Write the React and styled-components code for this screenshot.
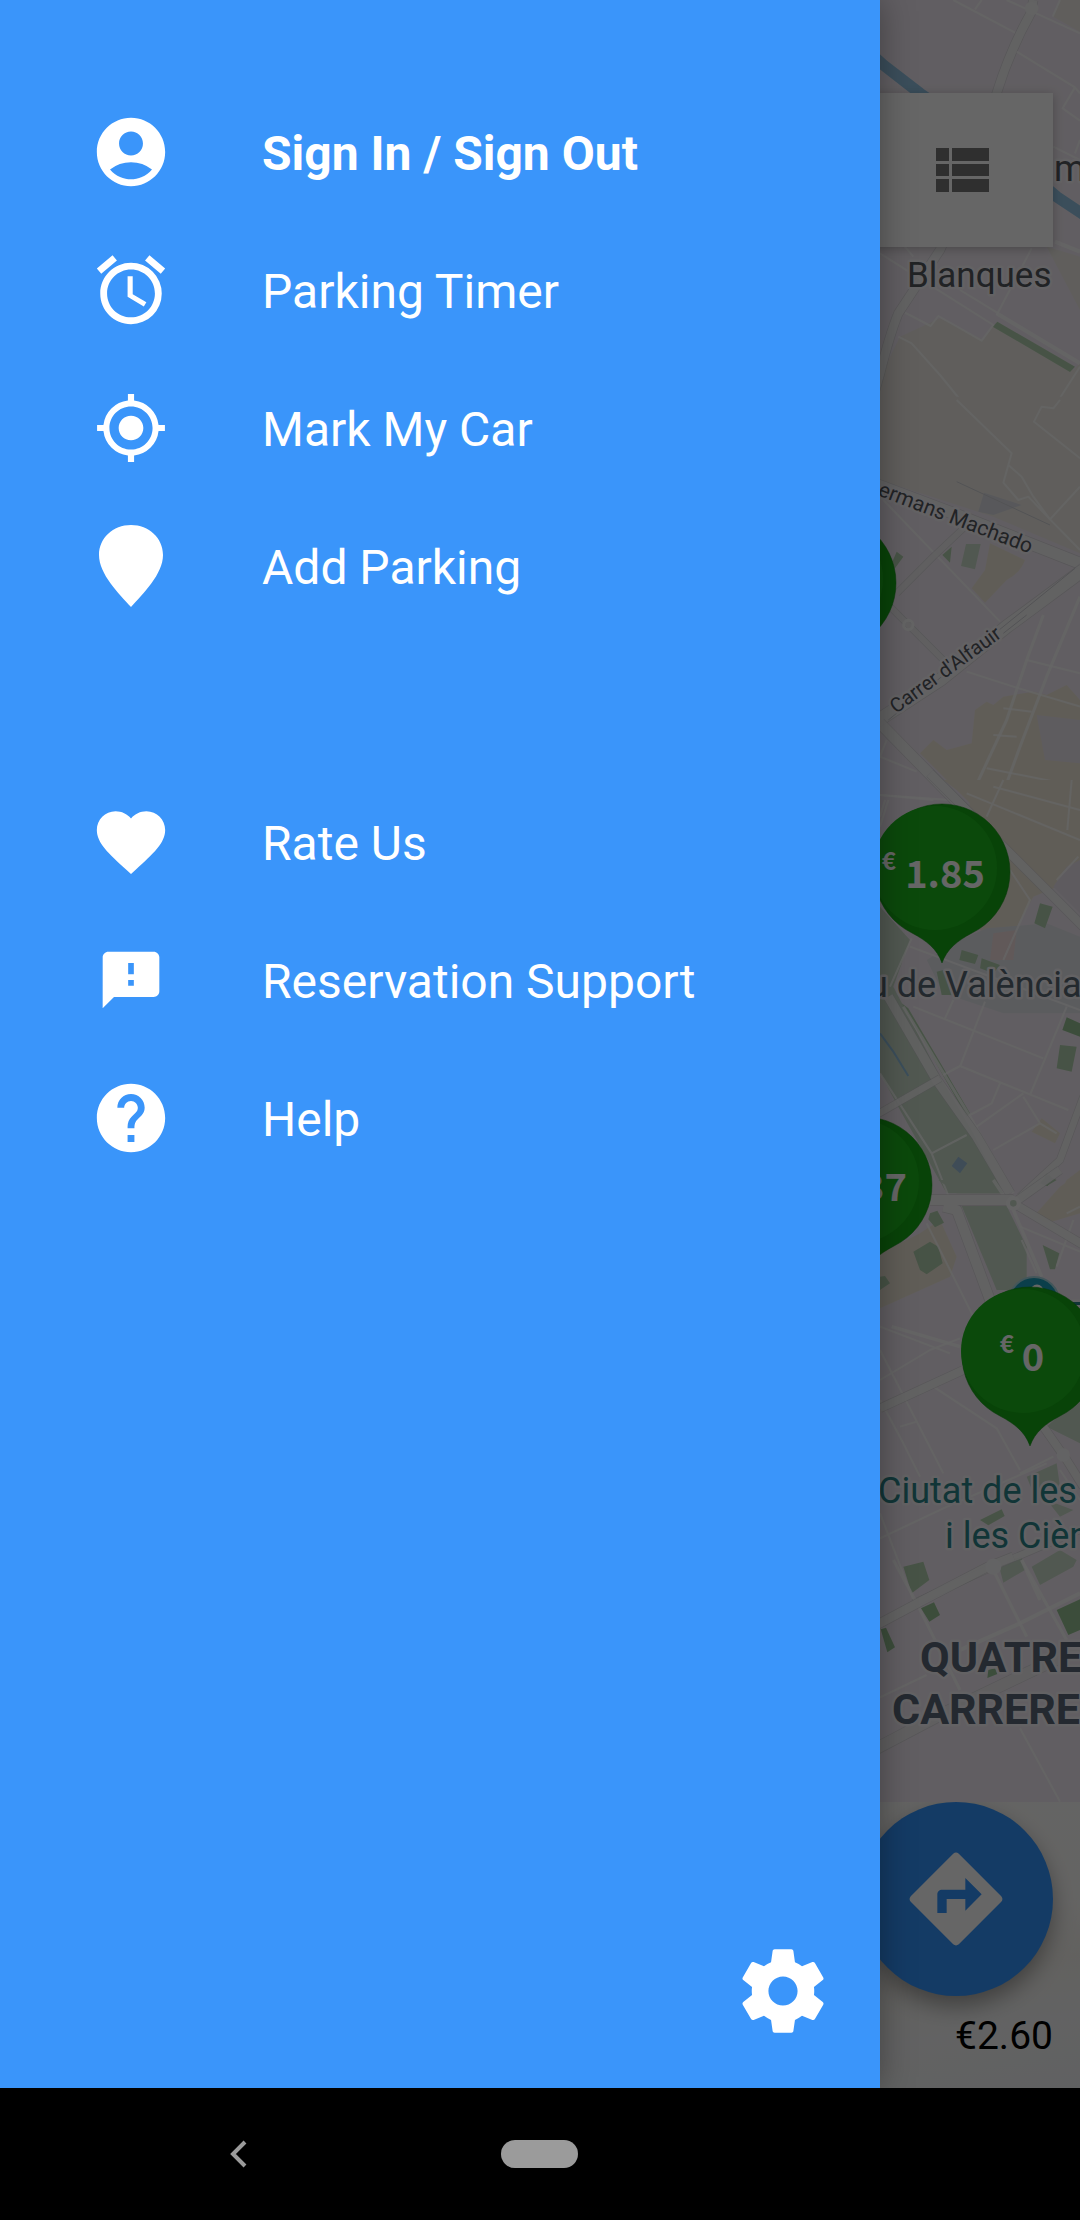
import React from 'react';
import styled, { createGlobalStyle } from 'styled-components';
import {
  MdAccountCircle,
  MdAlarm,
  MdMyLocation,
  MdFavorite,
  MdFeedback,
  MdHelp,
} from 'react-icons/md';

const GlobalStyle = createGlobalStyle`
  * {
    box-sizing: border-box;
  }
  body {
    margin: 0;
    background: #000;
    font-family: Roboto, "Noto Sans", sans-serif;
  }
  button {
    padding: 0;
    border: 0;
    background: none;
    color: inherit;
    font: inherit;
    cursor: pointer;
  }
`;

const Screen = styled.div`
  display: flex;
  flex-direction: column;
  min-height: 100vh;
`;

const Stage = styled.div`
  position: relative;
  display: flex;
  flex: 1;
  overflow: hidden;
`;

const Page = styled.main`
  display: flex;
  flex: 1;
  flex-direction: column;
  background: #fff;
`;

const MapArea = styled.section`
  position: relative;
  flex: 1;
  padding: 93px 27px 0;
  overflow: hidden;
`;

const MapCanvas = styled.svg`
  position: absolute;
  inset: 0;
  width: 100%;
  height: 100%;
`;

const SearchCard = styled.div`
  position: relative;
  display: flex;
  justify-content: flex-end;
  height: 154px;
  background: #fff;
  box-shadow: 0 2px 10px rgba(0, 0, 0, 0.25);
`;

const ListButton = styled.button`
  display: flex;
  align-items: center;
  justify-content: center;
  width: 181px;
  && {
    color: #757575;
  }
`;

const Sheet = styled.section`
  display: flex;
  flex-direction: column;
  align-items: flex-end;
  height: 286px;
  padding-right: 27px;
  background: linear-gradient(170deg, #fbfbfa 0%, #fbfaf8 60%, #f5f3ee 72%, #f5f6f7 84%, #f1f2f4 100%);
`;

const DirectionsButton = styled.button`
  display: flex;
  align-items: center;
  justify-content: center;
  width: 194px;
  height: 194px;
  border-radius: 50%;
  box-shadow: 0 10px 22px rgba(0, 0, 0, 0.35);
  && {
    background: #3394fd;
    color: #fff;
  }
`;

const Price = styled.p`
  margin: 16px 0 0;
  font-size: 39px;
  line-height: 48px;
  color: #000;
`;

const Scrim = styled.div`
  position: absolute;
  inset: 0;
  background: rgba(0, 0, 0, 0.6);
`;

const Drawer = styled.nav`
  position: absolute;
  top: 0;
  bottom: 0;
  left: 0;
  display: flex;
  flex-direction: column;
  width: calc(100% - 200px);
  max-width: 880px;
  padding-top: 83px;
  background: #3a95fa;
  box-shadow: 0 0 32px rgba(0, 0, 0, 0.35);
  color: #fff;
`;

const MenuList = styled.ul`
  margin: 0 0 138px;
  padding: 0;
  list-style: none;
`;

const MenuLink = styled.a`
  display: grid;
  grid-template-columns: 82px 1fr;
  gap: 90px;
  align-items: center;
  height: 138px;
  padding-left: 90px;
  color: #fff;
  font-size: 48px;
  font-weight: ${({ $strong }) => ($strong ? 700 : 400)};
  line-height: 56px;
  text-decoration: none;
`;

const MenuIcon = styled.span`
  display: flex;
  justify-content: center;
`;

const MenuLabel = styled.span`
  padding-top: 4px;
`;

const SettingsButton = styled.button`
  display: flex;
  align-self: flex-end;
  margin: auto 47px 47px 0;
`;

const SystemBar = styled.footer`
  display: grid;
  grid-template-columns: repeat(3, 28%);
  justify-content: center;
  height: 132px;
  background: #000;
`;

const SystemButton = styled.button`
  display: flex;
  align-items: center;
  justify-content: center;
`;

const HomePill = styled.span`
  width: 77px;
  height: 28px;
  border-radius: 14px;
  background: #9b9b9b;
`;

const PinIcon = () => (
  <svg width="64" height="82" viewBox="0 0 64 82" fill="currentColor">
    <path d="M32 0C14 0 0 13 0 30c0 19 20 39 32 52 12-13 32-33 32-52C64 13 50 0 32 0z" />
  </svg>
);

const SettingsIcon = () => (
  <svg width="100" height="100" viewBox="0 0 24 24" fill="currentColor">
    <path d="M19.43 12.98c.04-.32.07-.64.07-.98s-.03-.66-.07-.98l2.11-1.65c.19-.15.24-.42.12-.64l-2-3.46c-.12-.22-.39-.3-.61-.22l-2.49 1c-.52-.4-1.08-.73-1.69-.98l-.38-2.65C14.46 2.18 14.25 2 14 2h-4c-.25 0-.46.18-.49.42l-.38 2.65c-.61.25-1.17.59-1.69.98l-2.49-1c-.23-.09-.49 0-.61.22l-2 3.46c-.13.22-.07.49.12.64l2.11 1.65c-.04.32-.07.65-.07.98s.03.66.07.98l-2.11 1.65c-.19.15-.24.42-.12.64l2 3.46c.12.22.39.3.61.22l2.49-1c.52.4 1.08.73 1.69.98l.38 2.65c.03.24.24.42.49.42h4c.25 0 .46-.18.49-.42l.38-2.65c.61-.25 1.17-.59 1.69-.98l2.49 1c.23.09.49 0 .61-.22l2-3.46c.12-.22.07-.49-.12-.64l-2.11-1.65zM12 15.5c-1.93 0-3.5-1.57-3.5-3.5s1.57-3.5 3.5-3.5 3.5 1.57 3.5 3.5-1.57 3.5-3.5 3.5z" />
  </svg>
);

const DirectionsIcon = () => (
  <svg width="112" height="112" viewBox="0 0 24 24" fill="currentColor">
    <path d="M11.4 2.3Q12 1.8 12.6 2.3L21.7 11.4Q22.2 12 21.7 12.6L12.6 21.7Q12 22.2 11.4 21.7L2.3 12.6Q1.8 12 2.3 11.4zM14 14.5l3.5-3.5L14 7.5V10H9c-.55 0-1 .45-1 1v4h2v-3h4z" fillRule="evenodd" />
  </svg>
);

const ListIcon = () => (
  <svg width="53" height="44" viewBox="0 0 53 44" fill="currentColor">
    <path d="M0 0h13v13H0zM16 0h37v13H16zM0 16h13v12H0zM16 16h37v12H16zM0 31h13v13H0zM16 31h37v13H16z" />
  </svg>
);

const BackIcon = () => (
  <svg width="18" height="28" viewBox="0 0 18 28" fill="none" stroke="#9b9b9b" strokeWidth="4">
    <path d="M16 2L4 14l12 12" />
  </svg>
);

const mainItems = [
  { label: 'Sign In / Sign Out', icon: <MdAccountCircle size={82} />, strong: true },
  { label: 'Parking Timer', icon: <MdAlarm size={82} /> },
  { label: 'Mark My Car', icon: <MdMyLocation size={74} /> },
  { label: 'Add Parking', icon: <PinIcon /> },
];

const supportItems = [
  { label: 'Rate Us', icon: <MdFavorite size={82} /> },
  { label: 'Reservation Support', icon: <MdFeedback size={68} /> },
  { label: 'Help', icon: <MdHelp size={82} /> },
];

const Menu = ({ items }) => (
  <MenuList>
    {items.map(item => (
      <li key={item.label}>
        <MenuLink href="#" $strong={item.strong}>
          <MenuIcon>{item.icon}</MenuIcon>
          <MenuLabel>{item.label}</MenuLabel>
        </MenuLink>
      </li>
    ))}
  </MenuList>
);

// map geometry is kept in tiles, three units to a pixel
const Tile = ({ y, children }) => (
  <g transform={`translate(860 ${y}) scale(${1 / 3})`}>{children}</g>
);

const Roads = ({ d, w = 9, o = 0.75 }) => (
  <React.Fragment>
    {w > 14 && <path d={d} fill="none" stroke="#c9c9cd" strokeWidth={w + 4} opacity="0.6" />}
    <path d={d} fill="none" stroke="#fdfdfe" strokeWidth={w} opacity={o} strokeLinejoin="round" />
  </React.Fragment>
);

const Land = ({ d, fill }) => <path d={d} fill={fill} />;

const RURAL = '#efece6';
const SAND = '#f1e9da';
const PARK = '#cbdccb';
const GREEN = '#b2d0af';
const DEEP_GREEN = '#97c195';
const WATER = '#94c4e4';
const CAMPUS = '#e4e6ec';

const MapGround = () => (
  <React.Fragment>
    <Tile y={0}>
      <Land fill={RURAL} d="M600 0L660 0V95L580 50zM0 1260L60 1130 120 1010 240 955 370 1020 400 975 640 1110 660 1090V1300H0zM560 740L660 770V930z" />
      <Land fill={GREEN} d="M412 965L645 1100 630 1116 398 980z" />
      <path d="M20 150L70 195 180 280L400 430L590 590L680 650" fill="none" stroke={WATER} strokeWidth="34" />
      <Roads w={26} d="M520 0L512 40Q450 150 410 280L330 550 240 750 115 940Q90 1000 60 1120L20 1260" />
      <Roads w={6} d="M280 0L465 98M440 0L660 100M365 0L345 28M600 0L578 50M470 155L645 262 608 325 660 362M645 262L660 280M645 460L660 420M580 440L660 480M60 760L400 975 365 1022 235 948 212 978 135 938M135 740L160 770M515 745L410 945M300 870L415 940M115 1010L155 1030 240 1125 350 1260M660 1100L580 1225 545 1222 520 1260" />
      <Roads w={12} d="M410 940L660 1090M585 725L660 755" />
      <circle cx="515" cy="25" r="20" fill="#f7f7f8" />
    </Tile>
    <Tile y={400}>
      <Land fill={RURAL} d="M0 -10H660V460L400 350 60 240H0z" />
      <Land fill="#dcdde3" d="M372 278L485 315 400 345 355 335z" />
      <Land fill={SAND} d="M390 430L495 480Q480 520 440 540L375 608 335 565 375 510zM345 930L380 905 400 915 430 890 520 875 560 885 620 855 660 900V1260H380L180 1060 220 1020 260 1050 335 1030z" />
      <Land fill="#ece5ee" d="M530 945L660 960V1090L555 1080z" />
      <Land fill={PARK} d="M318 432L362 432 345 508 303 498z" />
      <Land fill={GREEN} d="M110 455L130 470 105 505 95 490zM275 440L270 488 247 465z" />
      <Roads w={6} d="M290 0L455 160 445 195 430 248 475 300 505 290 570 358 660 260M445 195L485 230 520 290 570 358 660 450M600 0L580 25 545 20 522 65 660 175M70 300L420 665M500 780L660 820M320 815L460 860 660 920M60 1070L170 1115M380 1105L660 1160M60 1185L270 1200M400 1005L470 1010M430 925L515 935M80 1020L60 1070M75 1200L60 1250" />
      <Roads w={9} d="M550 645L500 780 440 960 335 1185M660 590L560 830 480 1040 400 1260" />
      <Roads w={18} d="M310 385L220 470 110 580M60 590L130 660 250 780" o={0.6} />
      <Roads w={34} d="M40 250L280 340 660 490" />
      <Roads w={38} d="M670 510L440 680 240 840 40 970" />
      <Roads w={32} d="M60 970L310 1225 420 1330" />
      <circle cx="145" cy="675" r="14" fill="none" stroke="#fafafb" strokeWidth="9" />
      <path d="M290 245L570 375M500 645L430 700M85 960L645 505" fill="none" stroke="#cfcfd4" strokeWidth="3" />
    </Tile>
    <Tile y={780}>
      <Land fill={SAND} d="M250 0H660V240L590 320 520 350 470 440 380 460 300 420 330 60z" />
      <Land fill="#ebe4ee" d="M660 240L620 260 580 320 660 400z" />
      <Land fill={CAMPUS} d="M300 480L380 445 560 430 660 470V700L430 700 250 640 200 540z" />
      <Land fill="#f2dfdf" d="M400 460L470 450 460 540 390 540z" />
      <Land fill={PARK} d="M60 380L150 480 100 620 240 890 340 1060 430 1240H260L120 990 60 880z" />
      <Land fill={GREEN} d="M540 370L578 380 555 445 523 430zM305 510L355 525 345 552 298 540zM365 535L420 555 400 580 360 565zM230 575L250 570 275 645 245 645zM600 795L650 800 635 875 590 865zM125 670L145 685 330 1000 320 1010z" />
      <Land fill={DEEP_GREEN} d="M620 712L660 730V770L607 750zM560 1178L580 1198 562 1218 542 1200z" />
      <Land fill={SAND} d="M545 1015L600 1060 585 1090 515 1055zM620 1200L660 1170V1260H590z" />
      <path d="M60 760L100 815 145 888" fill="none" stroke={WATER} strokeWidth="6" />
      <Land fill="#9dbfd9" d="M295 1130L322 1150 300 1180 275 1158z" />
      <Roads w={6} d="M60 45L220 60M85 60L60 140M430 0L380 110M320 40L660 180M400 20L660 90M635 0L622 150M655 230L590 300M450 270L510 360 430 540M155 475L90 620M150 500L660 690M160 680L550 835M375 665L300 860M280 660L255 715M300 858L625 990M300 858L250 885M620 680L510 945M420 910L395 970 330 1005M490 940L350 1040M490 950L540 1030 400 1110M540 1030L590 1060M60 880L215 1120 320 1065M215 1120L270 1260" />
      <Roads w={9} d="M130 680L330 1010 460 1240" />
      <Roads w={26} d="M210 -20L440 210 670 440" />
      <Roads w={28} d="M85 650L230 900 350 1070 450 1240" />
      <Roads w={20} d="M40 1010L240 895M670 950L600 1140 480 1250" />
    </Tile>
    <Tile y={1180}>
      <Land fill={SAND} d="M60 220L180 160 240 120 290 230 270 290 60 385zM520 110L600 20 660 -20V100L560 130z" />
      <Land fill={PARK} d="M235 0H400L430 40 290 40zM305 78H440L500 200 500 330H410zM560 740L660 650V790zM500 890L590 850 600 920 520 940zM560 960L640 990 600 1010zM415 1150L485 1130 495 1170 430 1208zM515 1160L600 1110 650 1140 640 1160 540 1215z" />
      <Land fill={GREEN} d="M210 100L232 92 252 128 225 142 205 118zM160 215L210 185 235 200 248 250 200 283 180 270zM60 290L75 288 90 310 60 330zM548 195L598 220 585 268 570 268zM540 10L560 -15 590 0 560 18zM360 1020L425 988 434 1008 385 1036zM130 1160L190 1145 208 1200 155 1240z" />
      <Roads w={6} d="M200 130L340 410M60 440L270 520M60 600L210 510 300 475M60 510L250 880M60 660L130 790 180 890M220 620L410 745 480 870M120 740L170 725M480 880L580 830M60 1075L250 985 560 850M60 1000L160 1260M480 140L660 215M485 180L530 280M640 120L590 260M660 80L620 100M600 870L660 960" />
      <Roads w={10} d="M95 440L300 500M460 90L545 290M400 0L440 60M485 1140L540 1260" />
      <Roads w={30} d="M250 80L290 90 390 360 M210 60H460" />
      <Roads w={24} d="M460 70L600 -30M460 70L670 195M60 685L310 570M550 740L620 840 670 920" />
      <Roads w={20} d="M160 1270L400 1160 660 1050" />
      <circle cx="460" cy="70" r="16" fill={PARK} stroke="#fafafb" strokeWidth="12" />
      <circle cx="610" cy="825" r="20" fill="#f8f8f9" />
    </Tile>
    <Tile y={1560}>
      <Land fill={DEEP_GREEN} d="M183 145L222 127 240 165 208 185zM62 208L78 203 105 262 82 277zM590 150L660 118V210L625 225zM385 330L405 325 412 342 382 354z" />
      <Roads w={9} d="M100 0L160 110 220 230 300 390M400 30L500 230M485 0L620 240" />
      <Roads w={6} d="M60 412L200 345M480 505L600 725" />
      <Roads w={12} d="M660 100L480 190 300 270" />
      <Roads w={26} d="M50 195L200 115 380 22 460 -10" />
      <Roads w={34} d="M50 565L250 460 500 340 670 260" o={0.6} />
      <circle cx="400" cy="20" r="24" fill="#f8f8f9" />
    </Tile>
  </React.Fragment>
);

const Label = styled.text`
  fill: ${({ $tone }) => $tone || '#54575e'};
  stroke: #f8f5f9;
  stroke-width: 5px;
  stroke-linejoin: round;
  paint-order: stroke;
  font-size: ${({ $size }) => $size}px;
  font-weight: ${({ $heavy }) => ($heavy ? 700 : 400)};
`;

const PinText = styled.text`
  fill: #fff;
  font-family: "Noto Sans CJK SC", "Noto Sans", sans-serif;
  font-size: ${({ $small }) => ($small ? 24 : 38)}px;
  font-weight: 700;
  text-anchor: ${({ $small }) => ($small ? 'end' : 'middle')};
`;

const PricePin = ({ x, y, value, currencyX = 0 }) => (
  <g transform={`translate(${x} ${y})`}>
    <path
      d="M0 91C-5 77-15 69-30 61A68 68 0 1 1 30 61C15 69 5 77 0 91z"
      fill="#14a814"
      stroke="#0b8a10"
      strokeOpacity="0.5"
    />
    <circle cx="-7" cy="-4" r="62" fill="#1db61d" />
    {value && <PinText $small x={currencyX} y="-2">€</PinText>}
    {value && <PinText x="3" y="16">{value}</PinText>}
  </g>
);

const CityMap = () => (
  <MapCanvas viewBox="0 0 1080 1802" preserveAspectRatio="xMaxYMin slice">
    <rect width="1080" height="1802" fill="#f3ecf4" />
    <MapGround />
    <Label $size={36} x="1054" y="181">m</Label>
    <Label $size={35} x="907" y="287">Blanques</Label>
    <Label $size={21} transform="translate(877 495) rotate(21)">ermans Machado</Label>
    <Label $size={20} transform="translate(896 714) rotate(-36)">Carrer d'Alfauir</Label>
    <Label $size={36} $tone="#596873" x="868" y="997">u de València</Label>
    <Label $size={36} $tone="#2b8489" x="878" y="1503">Ciutat de les</Label>
    <Label $size={36} $tone="#2b8489" x="945" y="1548">i les Cièn</Label>
    <Label $size={43} $tone="#5a6878" $heavy x="920" y="1672">QUATRE</Label>
    <Label $size={43} $tone="#5a6878" $heavy x="892" y="1724">CARRERE</Label>
    <Label $size={36} $tone="#2b8489" x="1072" y="1328">T</Label>
    <circle cx="1034" cy="1302" r="25" fill="#1d9fbb" stroke="#a9d6e0" strokeWidth="2" />
    <circle cx="1037" cy="1291" r="5" fill="none" stroke="#fff" strokeWidth="3" />
    <PricePin x={828} y={583} />
    <PricePin x={942} y={872} value="1.85" currencyX={-46} />
    <PricePin x={864} y={1185} value="1.37" currencyX={-46} />
    <PricePin x={1030} y={1355} value="0" currencyX={-16} />
  </MapCanvas>
);

const App = () => (
  <Screen>
    <GlobalStyle />
    <Stage>
      <Page>
        <MapArea>
          <CityMap />
          <SearchCard>
            <ListButton type="button" aria-label="Show list"><ListIcon /></ListButton>
          </SearchCard>
        </MapArea>
        <Sheet>
          <DirectionsButton type="button" aria-label="Directions">
            <DirectionsIcon />
          </DirectionsButton>
          <Price>€2.60</Price>
        </Sheet>
      </Page>
      <Scrim />
      <Drawer>
        <Menu items={mainItems} />
        <Menu items={supportItems} />
        <SettingsButton type="button" aria-label="Settings"><SettingsIcon /></SettingsButton>
      </Drawer>
    </Stage>
    <SystemBar>
      <SystemButton type="button" aria-label="Back"><BackIcon /></SystemButton>
      <SystemButton type="button" aria-label="Home"><HomePill /></SystemButton>
    </SystemBar>
  </Screen>
);

export default App;
